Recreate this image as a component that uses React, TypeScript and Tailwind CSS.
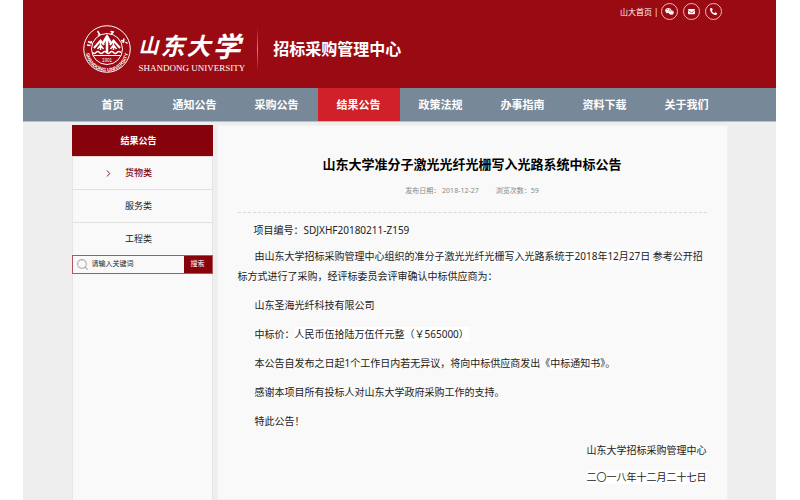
import { FaWeixin, FaEnvelope, FaPhoneAlt } from 'react-icons/fa'
import { ChevronRight, Search } from 'lucide-react'

const navItems = ['首页', '通知公告', '采购公告', '结果公告', '政策法规', '办事指南', '资料下载', '关于我们']
const categories = ['货物类', '服务类', '工程类']

const contacts = [
  { label: '微信', icon: <FaWeixin size={9} /> },
  { label: '邮箱', icon: <FaEnvelope size={7} /> },
  { label: '电话', icon: <FaPhoneAlt size={7} /> },
]

function Seal() {
  return (
    <svg viewBox="0 0 96 96" className="size-12 shrink-0" fill="none" stroke="white">
      <circle cx="48" cy="48" r="46.5" strokeWidth="2" />
      <circle cx="48" cy="48" r="31" strokeWidth="2" />
      {/* mountain */}
      <path d="M48 22 V55" strokeWidth="5" />
      <path d="M39 38 L48 23 L57 38" strokeWidth="5" />
      <path d="M22 46 L35 31 L42 40 M74 46 L61 31 L54 40" strokeWidth="4" />
      <path d="M29 48 L35 40 L41 48 M67 48 L61 40 L55 48 M35 31 V50 M61 31 V50" strokeWidth="3" />
      <path d="M19 55 q3.5 4 7 0 t7 0 t7 0 t7 0 t7 0 t7 0 t7 0 t8 0" strokeWidth="3" />
      <path d="M21 61 H75" strokeWidth="2" />
      {/* brush marks on the upper ring */}
      <path d="M10 33 l6 3 l1 -4 M8 40 l7 1 M29 12 l5 8 M33 18 l-3 3 M55 13 l7 1 M61 13 l-5 6 M76 31 l7 2 M82 27 l-2 9 M85 34 l4 3" strokeWidth="3" />
      <path id="ring" d="M5 50 A43 43 0 0 0 91 50" stroke="none" />
      <text fill="white" stroke="none" fontSize="10" fontWeight="bold" textAnchor="middle" fontFamily="Liberation Sans, sans-serif">
        <textPath href="#ring" startOffset="50%">SHANDONG UNIVERSITY</textPath>
      </text>
      <text x="48" y="73" fill="white" stroke="none" fontSize="9" textAnchor="middle" fontFamily="Liberation Sans, sans-serif">1901</text>
    </svg>
  )
}

function Header() {
  return (
    <header className="bg-[#9a0a12] text-white">
      <div className="relative max-w-[656px] h-[88px] mx-auto px-[11px] flex items-end pb-[15px]">
        <div className="flex items-center">
          <Seal />
          <div className="ml-2 pt-1 flex flex-col">
            <span className="flex items-center gap-[2px] leading-[34px] font-semibold italic">
              <span className="text-[20px]">山</span>
              <span className="text-[24px]">东</span>
              <span className="text-[24px]">大</span>
              <span className="text-[28px]">学</span>
            </span>
            <span className="text-[9px] leading-[10px] font-['Liberation_Serif',serif]">SHANDONG UNIVERSITY</span>
          </div>
          <div className="ml-3 h-11 w-px bg-gradient-to-b from-transparent via-[#d08084] to-transparent" />
          <h1 className="ml-[15px] text-[16px] leading-6 font-semibold">招标采购管理中心</h1>
        </div>
        <div className="absolute top-[3px] right-[6px] flex items-center gap-[5px] text-[8px]">
          <span className="-mr-[3px]"><a href="#">山大首页</a> |</span>
          {contacts.map((c) => (
            <a key={c.label} href="#" aria-label={c.label} className="size-[17px] rounded-full border border-[#e6babc] flex items-center justify-center">
              {c.icon}
            </a>
          ))}
        </div>
      </div>
    </header>
  )
}

function Sidebar() {
  return (
    <aside className="w-[141px] shrink-0 bg-[#f9f9f9] border-x border-[#e6e6e6]">
      <h2 className="-mx-px h-[31px] pr-[7px] bg-[#86030b] text-white text-[9px] font-bold flex items-center justify-center">结果公告</h2>
      <ul className="text-[9px]">
        {categories.map((name, i) => (
          <li key={name} className="border-t border-[#e0e0e0] first:border-t-[#e9d5d6]">
            <a href="#" className={`relative h-8 pr-[7px] flex items-center justify-center ${i === 0 ? 'text-[#86030b] font-medium' : 'text-[#222]'}`}>
              {i === 0 && <ChevronRight size={11} strokeWidth={2} className="absolute left-[30px]" />}
              {name}
            </a>
          </li>
        ))}
      </ul>
      <form className="-mx-px h-[19px] flex border border-[#b0555b]" onSubmit={(e) => e.preventDefault()}>
        <label htmlFor="keyword" className="w-[19px] flex items-center justify-center text-[#aaa]">
          <Search size={13} strokeWidth={2} aria-label="关键词" />
        </label>
        <input id="keyword" className="min-w-0 flex-1 text-[7px] placeholder:text-[#222] outline-none" placeholder="请输入关键词" />
        <button className="w-7 bg-[#86030b] text-white text-[7px]">搜索</button>
      </form>
    </aside>
  )
}

function Article() {
  return (
    <article className="flex-1 min-w-0 bg-[#f9f9f9] border border-[#f1f1f1] px-5 pt-7 pb-3">
      <h2 className="text-center text-[13px] leading-5 font-bold text-black">山东大学准分子激光光纤光栅写入光路系统中标公告</h2>
      <p className="mt-3 pb-4 flex justify-center gap-[17px] text-[7px] leading-[10px] text-[#888] border-b border-dashed border-[#d8d8d8]">
        <span>发布日期： 2018-12-27</span>
        <span>浏览次数：59</span>
      </p>
      <div className="mt-[7px] text-[10px] leading-5 text-[#222]">
        <p className="indent-4 mb-[6px]">项目编号：SDJXHF20180211-Z159</p>
        <div className="flex flex-col gap-[9px] indent-[17px]">
          <p>
            由山东大学招标采购管理中心组织的
            <span className="bg-white">准分子激光光纤光栅写入光路系统于2018年12月27日</span> 参考公开招标方式进行了采购，经评标委员会评审确认中标供应商为：
          </p>
          <p>山东圣海光纤科技有限公司</p>
          <p>中标价：<span className="bg-white">人民币伍拾陆万伍仟元整（￥565000）</span></p>
          <p>本公告自发布之日起1个工作日内若无异议，将向<span className="bg-white">中标</span>供应商发出《<span className="bg-white">中标通知书</span>》。</p>
          <p>感谢本项目所有投标人对山东大学政府采购工作的支持。</p>
          <p>特此公告！</p>
        </div>
        <div className="mt-[9px] flex flex-col gap-[7px] text-right">
          <p>山东大学招标采购管理中心</p>
          <p><span className="bg-white">二〇一八年十二月二十七日</span></p>
        </div>
      </div>
    </article>
  )
}

export default function App() {
  return (
    <div className="min-h-screen bg-white pl-[23px] pr-6 flex flex-col font-['Noto_Sans','Noto_Sans_CJK_SC',sans-serif]">
      <Header />
      <nav className="bg-[#778899] border-b border-[#b5bec7] text-white">
        <ul className="max-w-[656px] mx-auto flex">
          {navItems.map((item) => (
            <li key={item} className="flex-1">
              <a href="#" className={`h-[33px] pt-px flex items-center justify-center text-[11px] font-bold ${item === '结果公告' ? 'bg-[#d0202a]' : ''}`}>
                {item}
              </a>
            </li>
          ))}
        </ul>
      </nav>
      <main className="flex-1 bg-[#eee] pt-[3px] flex">
        <div className="w-full max-w-[656px] mx-auto flex gap-1">
          <Sidebar />
          <Article />
        </div>
      </main>
    </div>
  )
}
